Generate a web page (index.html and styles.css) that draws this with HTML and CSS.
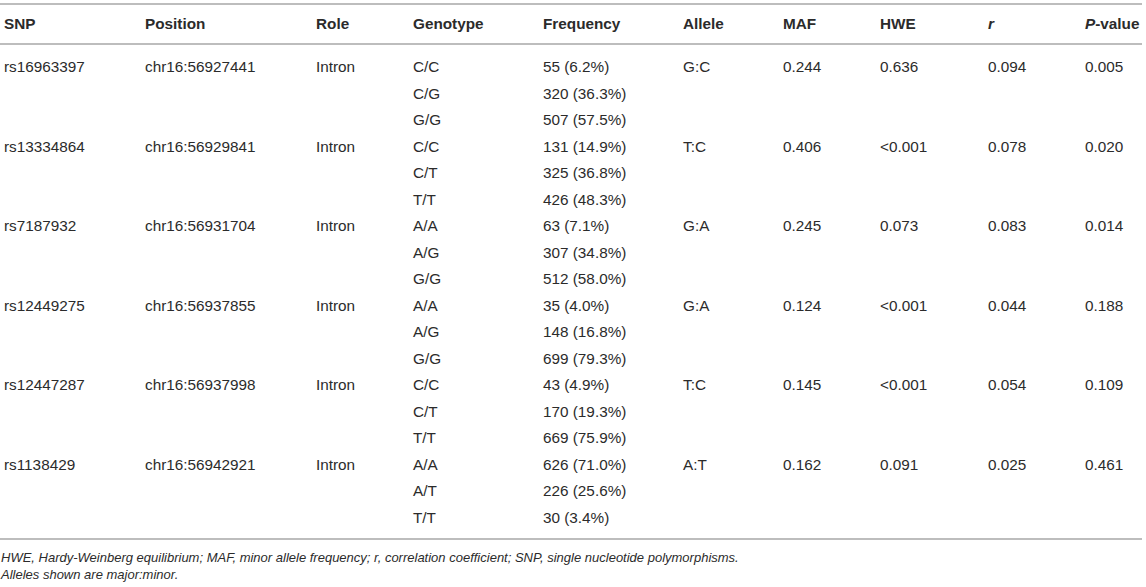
FILE: index.html
```html
<!DOCTYPE html>
<html lang="en">
<head>
  <meta charset="UTF-8" />
  <title>SNP table</title>
  <link rel="stylesheet" href="styles.css">
</head>
<body>
  <table class="snp-table">
    <colgroup>
      <col class="c-snp"><col class="c-pos"><col class="c-role"><col class="c-geno"><col class="c-freq">
      <col class="c-allele"><col class="c-maf"><col class="c-hwe"><col class="c-r"><col class="c-p">
    </colgroup>
    <thead>
      <tr>
        <th>SNP</th><th>Position</th><th>Role</th><th>Genotype</th><th>Frequency</th>
        <th>Allele</th><th>MAF</th><th>HWE</th><th><i>r</i></th><th><i>P</i>-value</th>
      </tr>
    </thead>
    <tbody>
      <tr>
        <td>rs16963397</td><td>chr16:56927441</td><td>Intron</td>
        <td>C/C<br>C/G<br>G/G</td><td>55 (6.2%)<br>320 (36.3%)<br>507 (57.5%)</td>
        <td>G:C</td><td>0.244</td><td>0.636</td><td>0.094</td><td>0.005</td>
      </tr>
      <tr>
        <td>rs13334864</td><td>chr16:56929841</td><td>Intron</td>
        <td>C/C<br>C/T<br>T/T</td><td>131 (14.9%)<br>325 (36.8%)<br>426 (48.3%)</td>
        <td>T:C</td><td>0.406</td><td>&lt;0.001</td><td>0.078</td><td>0.020</td>
      </tr>
      <tr>
        <td>rs7187932</td><td>chr16:56931704</td><td>Intron</td>
        <td>A/A<br>A/G<br>G/G</td><td>63 (7.1%)<br>307 (34.8%)<br>512 (58.0%)</td>
        <td>G:A</td><td>0.245</td><td>0.073</td><td>0.083</td><td>0.014</td>
      </tr>
      <tr>
        <td>rs12449275</td><td>chr16:56937855</td><td>Intron</td>
        <td>A/A<br>A/G<br>G/G</td><td>35 (4.0%)<br>148 (16.8%)<br>699 (79.3%)</td>
        <td>G:A</td><td>0.124</td><td>&lt;0.001</td><td>0.044</td><td>0.188</td>
      </tr>
      <tr>
        <td>rs12447287</td><td>chr16:56937998</td><td>Intron</td>
        <td>C/C<br>C/T<br>T/T</td><td>43 (4.9%)<br>170 (19.3%)<br>669 (75.9%)</td>
        <td>T:C</td><td>0.145</td><td>&lt;0.001</td><td>0.054</td><td>0.109</td>
      </tr>
      <tr>
        <td>rs1138429</td><td>chr16:56942921</td><td>Intron</td>
        <td>A/A<br>A/T<br>T/T</td><td>626 (71.0%)<br>226 (25.6%)<br>30 (3.4%)</td>
        <td>A:T</td><td>0.162</td><td>0.091</td><td>0.025</td><td>0.461</td>
      </tr>
    </tbody>
  </table>
  <div class="notes">
    <p>HWE, Hardy-Weinberg equilibrium; MAF, minor allele frequency; r, correlation coefficient; SNP, single nucleotide polymorphisms.</p>
    <p>Alleles shown are major:minor.</p>
  </div>
</body>
</html>
```

FILE: styles.css
```css
body {
  margin: 0;
  font-family: 'Liberation Sans', Arial, sans-serif;
  color: #2b2b2b;
  background-color: #fff;
}

.snp-table {
  width: 1142px;
  margin-top: 3px;
  border-collapse: collapse;
  table-layout: fixed;
  font-size: 15.3px;
  border-top: 2px solid #bdbdbd;
  border-bottom: 2px solid #bdbdbd;
}

.c-snp { width: 141px; }
.c-pos { width: 171px; }
.c-role { width: 97px; }
.c-geno { width: 130px; }
.c-freq { width: 140px; }
.c-allele { width: 100px; }
.c-maf { width: 97px; }
.c-hwe { width: 108px; }
.c-r { width: 97px; }
.c-p { width: 61px; }

.snp-table th {
  text-align: left;
  font-weight: bold;
  height: 38px;
  padding: 0 0 0 4px;
  border-bottom: 2px solid #bdbdbd;
  white-space: nowrap;
}

.snp-table td {
  text-align: left;
  vertical-align: top;
  line-height: 26.5px;
  padding: 0 0 0 4px;
  white-space: nowrap;
}

.snp-table tbody tr:first-child td {
  padding-top: 9px;
}

.snp-table tbody tr:last-child td {
  padding-bottom: 7px;
}

.notes {
  padding-left: 1px;
  font-size: 13px;
  font-style: italic;
  color: #2b2b2b;
  margin-top: 9px;
}

.notes p {
  margin: 0;
  line-height: 17px;
}
```
